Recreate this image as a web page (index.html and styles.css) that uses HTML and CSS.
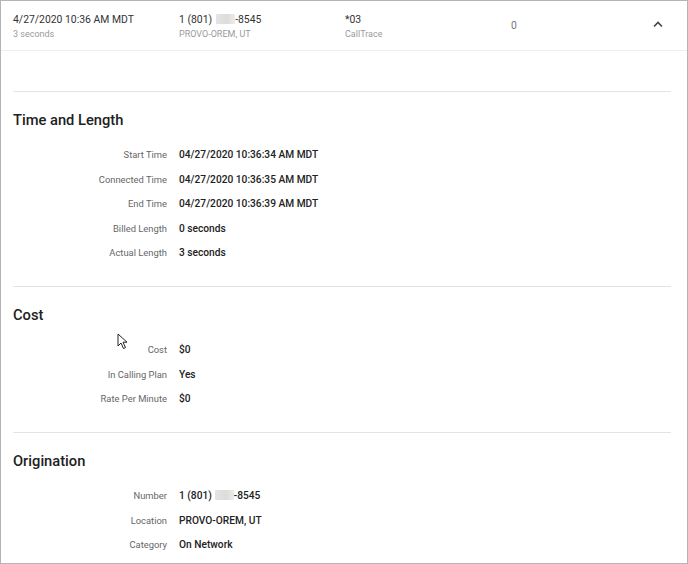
FILE: index.html
```html
<!DOCTYPE html>
<html lang="en">
<head>
<meta charset="utf-8">
<title>Call detail</title>
<link rel="stylesheet" href="styles.css">
</head>
<body>
<div class="panel">
  <div class="summary">
    <div class="cell">
      <div class="main">4/27/2020 10:36 AM MDT</div>
      <div class="sub">3 seconds</div>
    </div>
    <div class="cell">
      <div class="main">1 (801)<span class="redact"></span>-8545</div>
      <div class="sub">PROVO-OREM, UT</div>
    </div>
    <div class="cell">
      <div class="main">*03</div>
      <div class="sub">CallTrace</div>
    </div>
    <div class="cell mid">
      <div class="main">0</div>
    </div>
    <div class="toggle">
      <svg width="12" height="8" viewBox="0 0 12 8"><path d="M2 6.5 L6 2.5 L10 6.5" fill="none" stroke="#444" stroke-width="1.6"/></svg>
    </div>
  </div>

  <div class="details">
    <section class="group">
      <h2>Time and Length</h2>
      <div class="fields">
        <div class="label">Start Time</div><div class="value">04/27/2020 10:36:34 AM MDT</div>
        <div class="label">Connected Time</div><div class="value">04/27/2020 10:36:35 AM MDT</div>
        <div class="label">End Time</div><div class="value">04/27/2020 10:36:39 AM MDT</div>
        <div class="label">Billed Length</div><div class="value">0 seconds</div>
        <div class="label">Actual Length</div><div class="value">3 seconds</div>
      </div>
    </section>
    <section class="group">
      <h2>Cost</h2>
      <div class="fields">
        <div class="label">Cost</div><div class="value">$0</div>
        <div class="label">In Calling Plan</div><div class="value">Yes</div>
        <div class="label">Rate Per Minute</div><div class="value">$0</div>
      </div>
    </section>
    <section class="group">
      <h2>Origination</h2>
      <div class="fields">
        <div class="label">Number</div><div class="value">1 (801)<span class="redact"></span>-8545</div>
        <div class="label">Location</div><div class="value">PROVO-OREM, UT</div>
        <div class="label">Category</div><div class="value">On Network</div>
      </div>
    </section>
  </div>

  <svg class="cursor" width="12" height="18" viewBox="0 0 12 18"><path d="M1 1 L1 13 L4 10 L6.5 15.5 L8.5 14.6 L6 9.2 L10 9.2 Z" fill="#fff" stroke="#222" stroke-width="1"/></svg>
</div>
</body>
</html>
```

FILE: styles.css
```css
html, body {
  margin: 0;
  padding: 0;
  background: #fff;
}
body {
  font-family: Roboto, "Liberation Sans", Arial, sans-serif;
  color: #222;
}
.panel {
  position: relative;
  width: 688px;
  height: 564px;
  box-sizing: border-box;
  border: 1px solid #b4b4b4;
  overflow: hidden;
  background: #fff;
}
.summary {
  display: grid;
  grid-template-columns: 166px 166px 166px 1fr 40px;
  align-items: center;
  height: 49px;
  padding-left: 12px;
  padding-right: 3px;
  border-bottom: 1px solid #eeeeee;
}
.cell {
  padding-top: 2px;
}
.cell .main {
  font-size: 10.4px;
  line-height: 14px;
  color: #333;
}
.cell .sub {
  font-size: 9px;
  line-height: 12px;
  color: #9a9a9a;
  margin-top: 1px;
}
.cell.mid {
  padding-top: 0;
}
.cell.mid .main {
  color: #777;
}
.toggle {
  display: flex;
  justify-content: center;
  align-items: center;
  padding-right: 12px;
}
.toggle svg {
  display: block;
  margin-top: -4px;
}
.redact {
  display: inline-block;
  width: 19px;
  height: 10px;
  margin: 0 0 0 4px;
  vertical-align: -1px;
  background: linear-gradient(90deg, #e4e4e4, #dcdcdc 60%, #ececec);
}
.details {
  padding: 40px 16px 0 12px;
}
.group {
  border-top: 1px solid #e3e3e3;
  padding: 17.5px 0 21px;
}
.group h2 {
  margin: 0;
  font-size: 14.7px;
  line-height: 20px;
  font-weight: 500;
  color: #212121;
}
.fields {
  display: grid;
  grid-template-columns: 154px 1fr;
  column-gap: 12px;
  grid-auto-rows: 24.5px;
  align-items: center;
  margin-top: 13px;
}
.label {
  text-align: right;
  font-size: 9.4px;
  color: #666;
}
.value {
  font-size: 10.2px;
  font-weight: 500;
  color: #222;
}
.value .redact {
  margin: 0 0 0 3px;
}
.cursor {
  position: absolute;
  left: 116px;
  top: 332px;
}
```
